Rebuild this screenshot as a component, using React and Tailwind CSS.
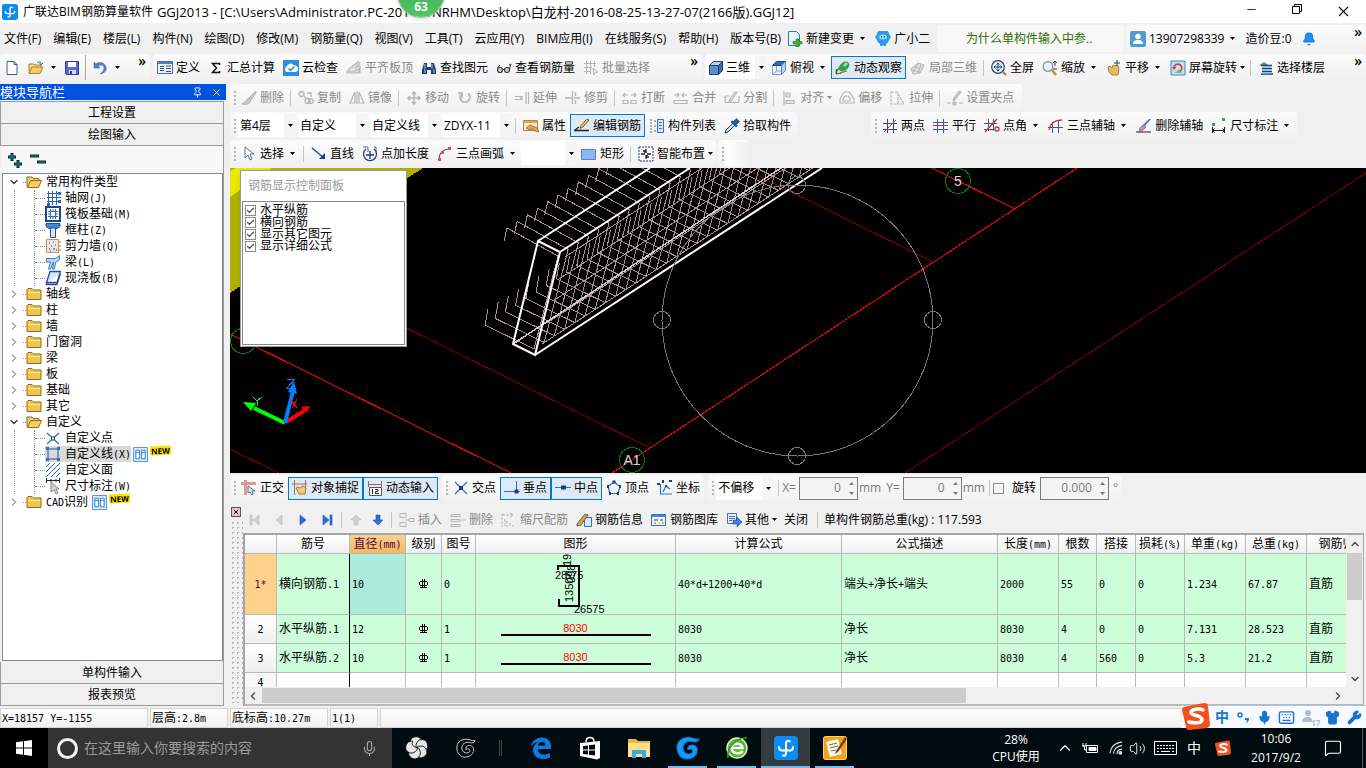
import { useState } from "react";
import clsx from "clsx";
import {
  Bell,
  Check,
  ChevronDown,
  ChevronLeft,
  ChevronRight,
  ChevronUp,
  Keyboard,
  MessageSquare,
  Mic,
  Minus,
  Pin,
  Shirt,
  Volume2,
  Wifi,
  Wrench,
  X,
} from "lucide-react";

const navy = "#1f3f77";
const blue = "#2a6fc9";

// 16x16 toolbar glyphs
const glyphs = {
  file: <path d="M3 1.5h7l3 3v10H3zM10 1.5v3h3" fill="#fff" stroke="#3c5a86" />,
  open: (
    <>
      <path d="M1 13V4h5l1 1h6v3" fill="#f6d77c" stroke="#a8813a" />
      <path d="M1 13.5 4 7h11l-3 6.5z" fill="#fbc95c" stroke="#a8813a" />
      <path d="M9 3c2-2 4-1 4 1m-1.500-1L13 5l2-2" fill="none" stroke="#3a6ea5" />
    </>
  ),
  save: (
    <>
      <path d="M1.500 1.500h13v13h-12l-1-1z" fill="#5b68d6" stroke="#2d3a8c" />
      <path d="M4 2h8v5H4z" fill="#fff" />
      <path d="M5 10h7v4H5z" fill="#d8dcf5" />
      <path d="M6 11h2v3H6z" fill="#2d3a8c" />
    </>
  ),
  undo: (
    <path d="M2 2v6h6L6 6c3-2 6-1 6 2 0 2-1 4-4 6 5-1 7-4 6-7C13 3 8 1 4 4z" fill="#4a86d8" stroke="#2a5ca8" strokeWidth=".5" />
  ),
  define: (
    <>
      <path d="M.5 1.500h15v12H.5z" fill="#e8f0fb" stroke="#4a72ad" />
      <path d="M1 2h14v2H1z" fill="#4a80cc" />
      <path d="M3 6.500h4M3 8.500h4M3 10.500h4M9 8.500h5M9 11.500h5M9 6h5" stroke="#2f4f85" />
    </>
  ),
  sigma: <path d="M11.500 5V3.500h-7L8.500 8l-4 4.500h7V11" fill="none" stroke="#111" strokeWidth="1.500" />,
  cloud: (
    <>
      <path d="M0 0h16v16H0z" fill="#2a8fdc" />
      <path d="M4 12a3 3 0 0 1-.5-5.500A4.200 4.200 0 0 1 11 5.500 3.300 3.300 0 0 1 12.500 12z" fill="#fff" />
      <path d="m5.500 8.500 2 2 4-4" fill="none" stroke="#2a8fdc" strokeWidth="1.500" />
    </>
  ),
  slab: (
    <path d="M1 13h12V9l-5 2H1zM3 9l9-7 2 1-5 6M3 11V8M12 6h2v7" fill="#ddd" stroke="#b5b5b5" strokeWidth="1.200" />
  ),
  find: (
    <>
      <path d="M3 3h3v4h4V3h3l2 7v4h-5v-4H6v4H1v-4z" fill={navy} />
      <path d="M3 10h1v3M12 10h1v3M4 4v5M11 4v5" stroke="#a9c4ee" fill="none" />
    </>
  ),
  glasses: (
    <>
      <circle cx="4" cy="10" r="2.500" fill="#cfd6df" stroke="#333" strokeWidth="1.200" />
      <circle cx="11" cy="10" r="2.500" fill="#cfd6df" stroke="#333" strokeWidth="1.200" />
      <path d="M7 9.500h1M1.500 8 4 5M13.500 9 15 4l-2 1" stroke="#333" fill="none" />
    </>
  ),
  grid: <path d="M1 3.500h12M1 7.500h8M1 11.500h7M3.500 1v13M7.500 1v13M11.500 1v6M10 8l5 4-3 .5-1 2.500z" fill="none" stroke="#b5b5b5" />,
  cube: (
    <>
      <path d="M1.500 5.500h9v9h-9z" fill="#5f8fc4" stroke={navy} />
      <path d="m1.500 5.500 4-4h9l-4 4z" fill="#b4d2f0" stroke={navy} />
      <path d="m10.500 5.500 4-4v9l-4 4z" fill="#3a6aa6" stroke={navy} />
    </>
  ),
  cubeTop: (
    <>
      <path d="M1.500 5.500h9v9h-9z" fill="#e6f1fc" stroke="#7fa7d4" />
      <path d="m1.500 5.500 4-4h9l-4 4z" fill="#2f6cb4" stroke={navy} />
      <path d="m10.500 5.500 4-4v9l-4 4z" fill="#b4d2f0" stroke="#5c8bc4" />
      <path d="M5.500 6v5h5M5.500 11l-3.500 3" stroke="#7fa7d4" fill="none" />
    </>
  ),
  orbit: (
    <>
      <path d="M1 14c1-4 4-8 9-9M1 14l5-1M1 14l.5-5" stroke="#2f6e3f" strokeWidth="1.200" fill="none" />
      <ellipse cx="9" cy="6.500" rx="6" ry="4" fill="#2fa24a" transform="rotate(-40 9 6.500)" />
      <ellipse cx="10.500" cy="4.500" rx="2.500" ry="1.500" fill="#9be3a7" transform="rotate(-40 10.500 4.500)" />
      <path d="m5 13 7-2" stroke="#c04a3a" />
    </>
  ),
  cubeGray: (
    <>
      <path d="m1 9 7-6 6 2-4 8-7 1z" fill="#dedede" stroke="#b5b5b5" />
      <path d="m4 6.500 6 2.500M3 12l5-8M8 13l3-8M2 10l8 2" stroke="#b5b5b5" fill="none" />
    </>
  ),
  full: (
    <>
      <circle cx="7" cy="7" r="6.300" fill="#eaf2fc" stroke={navy} strokeWidth="1.200" />
      <path d="M7 3v8M3 7h8M5.500 4.500 7 3l1.500 1.500M5.500 9.500 7 11l1.500-1.500M4.500 5.500 3 7l1.500 1.500M9.500 5.500 11 7 9.500 8.500" fill="none" stroke={navy} />
      <path d="m12 12 3 3" stroke="#b9763a" strokeWidth="2.200" />
    </>
  ),
  zoom: (
    <>
      <circle cx="6" cy="6.500" r="4.800" fill="#eaf2fc" stroke="#8496b0" strokeWidth="1.400" />
      <path d="m10 10 4 5" stroke="#c98a3a" strokeWidth="2.500" />
      <path d="M13 1v5M11 3l2-2 2 2M11 9h4" stroke={navy} fill="none" />
    </>
  ),
  pan: (
    <>
      <path d="M2 7l2-1 2 2 1-3 2 1 1-1 2 1 1 3-1 6H6L3 12z" fill="#e4bd62" stroke="#a8813a" />
      <path d="M11 0v6M8 3h6" stroke={navy} />
    </>
  ),
  spin: (
    <>
      <path d="M1 1h14v14H1z" fill="#bfe2f7" stroke="#3a86c8" />
      <path d="M4 13h8l-3-4-2 2z" fill="#7ec36a" />
      <path d="M4 7a4 4 0 1 1 6 4.500" fill="none" stroke="#d83a2a" strokeWidth="1.600" />
      <path d="M2 7h4.500L4 10z" fill="#d83a2a" />
    </>
  ),
  floors: (
    <>
      <path d="M1 5.500 6 2l5 3.500z" fill="#3fae5a" />
      <path d="M3 5.500h11M4 8.500h10M4 11.500h10M3 14h12" stroke={navy} strokeWidth="1.300" />
      <path d="M4 7h9M4 10h9M4 13h9" stroke="#6ec3e0" />
    </>
  ),
  brush: <path d="M15 1 8 8l2 2 5-7zM8 8c-3 1-3 4-7 6 5 1 8 0 9-4z" fill="#c9c9c9" stroke="#b0b0b0" />,
  copy: (
    <g fill="none" stroke="#b5b5b5" strokeWidth="1.300">
      <circle cx="3.500" cy="4" r="2.500" />
      <circle cx="9.500" cy="11" r="2.500" />
      <circle cx="13" cy="11" r="2.300" />
      <path d="m6 6 2 2M9 3h4v4" />
    </g>
  ),
  mirror: <path d="M6 2v11H1zM10 2v11h5zM8 1v13" fill="none" stroke="#b5b5b5" strokeWidth="1.200" />,
  move: <path d="M8 2v12M2 8h12M6 4l2-2 2 2M6 12l2 2 2-2M4 6 2 8l2 2M12 6l2 2-2 2" fill="none" stroke="#b5b5b5" strokeWidth="1.500" />,
  rotate: <path d="M4 4a5 5 0 1 0 8 0M5 8V3H1M12 3v3" fill="none" stroke="#bdbdbd" strokeWidth="2" />,
  extend: <path d="M1 6.500h6v3H1M8 6v4M12 2v12M14.500 2v12" fill="none" stroke="#b5b5b5" strokeWidth="1.200" />,
  trim: <path d="M0 8h7M9 8h6M7.500 1v13M10.500 2v4M10.500 10v4" fill="none" stroke="#b5b5b5" strokeWidth="1.300" />,
  break: <path d="M1 10.500h5v3H1zM9 10.500h5v3H9zM1 5h5M9 5h5M3 3 1 5l2 2M12 3l2 2-2 2" fill="none" stroke="#b5b5b5" strokeWidth="1.200" />,
  merge: <path d="M1 10.500h13v3H1zM1 5h5M9 5h5M4 3l2 2-2 2M11 3 9 5l2 2" fill="none" stroke="#b5b5b5" strokeWidth="1.200" />,
  split: <path d="M1 6h5M1 12.500h14M1 6v6M15 6v6M13 2 7 11l-2 1 .5-2L11 2z" fill="none" stroke="#b5b5b5" strokeWidth="1.200" />,
  align: <path d="M3 1v14M5 3h4v4H5zM5 10.500h8v3H5z" fill="#e2e2e2" stroke="#b5b5b5" strokeWidth="1.200" />,
  offset: <path d="M5 2h5l5 7v4H1V9zM6 6h3l2 3v2H4V9z" fill="none" stroke="#b5b5b5" strokeWidth="1.200" />,
  stretch: <path d="M1 2h7v12H1zM8 4l6 10H8" fill="none" stroke="#b5b5b5" strokeWidth="1.200" strokeDasharray="3 1" />,
  clip: <path d="M0 13h4M12 13h4M6 12h3v3H6zM14 2 8 10l-2 .5.500-2L12 1z" fill="#c9c9c9" stroke="#b5b5b5" />,
  props: (
    <>
      <path d="M.5 2.500h14v10H.5z" fill="#f4ead0" stroke="#a58a54" />
      <path d="M1 3h13v2H1z" fill="#f0a23a" />
      <path d="m3 10 4-3 7 3 2 4-4-1-3-2-3 1z" fill="#e9a63c" stroke="#8a5a1c" strokeWidth=".7" />
    </>
  ),
  pencil: (
    <>
      <path d="M0 12.500h15M1 12l4-3" stroke="#222" strokeWidth="1.300" />
      <path d="m13 1 2 1-6 7-3 1.500 1-3z" fill="#e9b95a" stroke="#6b4a1c" strokeWidth=".8" />
    </>
  ),
  list: (
    <>
      <path d="M1 2h2M1 5h2M1 8h2M1 11h2M1 14h2M5 3h2M5 8h2M5 13h2" stroke="#666" />
      <path d="M8.500 1.500h6v13h-6z" fill="#dbe8fa" stroke={blue} />
      <path d="M10 4.500h3M10 7.500h3M10 10.500h3" stroke={blue} />
    </>
  ),
  picker: (
    <>
      <path d="m1 15 1-3 7-7 2 2-7 7z" fill="#cfe0f7" stroke={navy} />
      <path d="m7 4 5 5 1.500-1.500-1-1 3-3-3-3-3 3-1-1z" fill="#2458b0" stroke={navy} strokeWidth=".6" />
    </>
  ),
  axisTwo: <><path d="M1 5.500h14M1 11.500h14M5.500 1v14M11.500 1v14" stroke="#2f4a8c" /><path d="M2 14 14 2" stroke="#d12a2a" /></>,
  axisPar: <><path d="M0 11.500h15M4.500 1v14M10.500 1v14M0 4.500h15" stroke="#3a56a0" /><path d="M0 7.500h15" stroke="#d12a2a" /></>,
  axisAngle: <><path d="M0 5.500h13M0 11.500h10M4.500 1v12M9.500 1v12" stroke="#3a56a0" /><path d="M1 14 13 1" stroke="#d12a2a" strokeWidth="1.300" /><circle cx="13" cy="11" r="2" fill="none" stroke="#d12a2a" strokeWidth="1.300" /></>,
  axisArc: <><path d="M4.500 4v11M10.500 3v12M0 9.500h15" stroke="#3a56a0" /><path d="M1 12C2 6 6 2 14 2" fill="none" stroke="#d12a2a" strokeWidth="1.300" /></>,
  axisDel: (
    <>
      <path d="M0 14h15" stroke="#222" />
      <path d="m15 1-6 7-2-1 6-6z" fill="#3f76c8" />
      <path d="m4 10 3-3 3 2-4 4-3 1z" fill="#d58ab8" stroke="#7a4a6c" strokeWidth=".7" />
    </>
  ),
  dim: <><path d="M1.500 9v6M13.500 9v6M1 12.500h13M3.500 10.500l-2 2 2 2M11.500 10.500l2 2-2 2" fill="none" stroke="#222" /><path d="M1 5h3v3H1zM11 0h3v3h-3z" fill="#3aa54a" /></>,
  cursor: <path d="M4 1v11l3-3 2 5 2-1-2-5h4z" fill="#fff" stroke="#5a6f9a" />,
  line: <><path d="M1 2 13 12" stroke={navy} strokeWidth="1.300" /><path d="M14 7v6H8z" fill={navy} /></>,
  plusLen: <><path d="M4 3a6.500 6.500 0 1 0 8 0M8 5v8M4 9h8" fill="none" stroke={navy} strokeWidth="1.300" /><path d="M1 1h5v5M12 1h2v5" fill="none" stroke={blue} /></>,
  arc: <><path d="M2 14C2 7 6 3 13 3" fill="none" stroke="#3a56a0" strokeWidth="1.200" /><path d="M1 12h3v3H1zM4 5h3v3H4zM11 1h3v3h-3z" fill="#e0523a" /></>,
  rect: <path d="M.5 3.500h14v10H.5z" fill="#8fb4f4" stroke="#5c7fd0" />,
  smart: <><path d="M1 1h14v14H1z" fill="none" stroke={navy} strokeDasharray="2 1" /><path d="M8 3v4M8 9v4M3 8h4M9 8h4M5 5h2v2M11 11H9V9" stroke="#222" fill="none" strokeWidth="1.300" /></>,
  ortho: <><path d="M0 3.500h15M4.500 0v15" stroke="#d99a9a" strokeWidth="3" /><path d="M7 6v7l2-1 2 3 1-1-1-3h3z" fill="#e6ecf5" stroke="#5c7396" /></>,
  snap: <><path d="M2.500 0v15M13.500 0v10M0 4h15" stroke="#a86a6a" /><path d="m4 8 2-1 2 1 3-2 3 2-1 6H7z" fill="#f0cb74" stroke="#a07a30" /></>,
  dyn: <><path d="M1 4.500h14M1.500 1v6M14.500 1v6" stroke="#b05a5a" fill="none" /><path d="M2.500 7.500h12v8h-12z" fill="#fff" stroke="#555" /><path d="M5.500 9v5M8 9.500h3v2H8.500v2H12" stroke="#222" fill="none" /></>,
  cross: <><path d="m2 2 12 12M14 2 2 14" stroke={blue} strokeWidth="1.200" /><path d="M6 6h4v4H6z" fill={navy} /></>,
  perp: <><path d="M0 11.500h16M12.500 1v10" stroke={blue} /><path d="M10.500 9.500h4v4h-4z" fill={navy} /></>,
  mid: <><path d="M0 7.500h16" stroke={blue} /><path d="M6 5.500h5v4H6z" fill={navy} /></>,
  vertex: <><path d="m8 2 6 4.500-2 7H4l-2-7z" fill="none" stroke={blue} strokeWidth="1.200" /><path d="M6.500.5h3v3h-3zM1 5h2v3H1zM13 5h2v3h-2zM3 12h2v3H3zM11 12h2v3h-2z" fill={navy} /></>,
  coord: <><path d="M3.500 4v10H15M6 12l3-6 4 3" fill="none" stroke={blue} strokeWidth="1.200" /><path d="M0 3h3v2H0zM5 0h2v3H5zM12 0h3v2h-3zM8 5h2v2H8z" fill={navy} /></>,
  insert: <path d="M1 1.500h6v4H1zM1 10.500h6v4H1zM10 6.500h5v3h-5zM6 8h3" fill="none" stroke="#b5b5b5" />,
  remove: <path d="M1 2.500h9v2H1zM1 7.500h9v2H1zM1 12.500h9v2H1zM11 8h5" fill="none" stroke="#b5b5b5" />,
  ruler: <path d="M1 1v14M1 3h11M9 1l3 2-3 2M4 7v8M6 9v6M9 11v4M12 13v2" fill="none" stroke="#b5b5b5" strokeDasharray="3 1" />,
  info: <><path d="M8.500 5.500h7v9h-7z" fill="#dce9fb" stroke={blue} /><path d="M1 12 9 2l3 1-7 10-4 1z" fill="#e0a14a" stroke="#444" strokeWidth=".8" /></>,
  lib: <><path d="M.5 2.500h14v11H.5z" fill="#eef4fc" stroke={blue} /><path d="M1 3h13v2H1z" fill="#4a86d8" /><path d="M3 8h4M9 8h3" stroke={navy} /><path d="M3 11h2" stroke="#d33" /><path d="M7 11h2" stroke="#e9a63c" /><path d="M11 11h2" stroke="#3a3" /></>,
  other: <><path d="M1.500 1.500h9v10h-9z" fill="#eef4fc" stroke="#4a72ad" /><path d="M3 4.500h6M3 6.500h6M3 8.500h3" stroke="#4a72ad" /><path d="M7 8h4V5l5 5-5 5v-3H7z" fill="#3f7fe0" stroke={navy} strokeWidth=".5" /></>,
  newDoc: <><path d="M1.500.5h8l3 3v11h-11z" fill="#e9f6fc" stroke="#2a7fa8" /><path d="M9 8h3v2.500h3V13h-3v3H9v-3H6v-2.500h3z" fill="#47b52a" stroke="#2a7a18" strokeWidth=".6" /></>,
  robot: <><path d="M2 3a6 4.500 0 0 1 12 0l2 3-2 3a5 5 0 0 1-3 4v2H9l-1-1-1 1H5v-2a5 5 0 0 1-3-4L0 6z" fill="#2a9bea" /><ellipse cx="8" cy="6" rx="4" ry="2.500" fill="#9fd4fa" /><path d="M6.500 5v1.500M9.500 5v1.500" stroke="#0a4a88" /></>,
  user: <><rect width="16" height="16" rx="2" fill="#4a9fd0" /><circle cx="8" cy="5.500" r="2.700" fill="#fff" /><path d="M3 13c0-3 2-4 5-4s5 1 5 4z" fill="#fff" /></>,
  // tree
  folder: <><path d="M1 13.500v-10l1-1h4l1.500 1.500H15v9.500z" fill="#f3c64e" stroke="#8f6c24" /><path d="M2 6h12v1H2z" fill="#fdeba8" /></>,
  folderOpen: <><path d="M1 13V3h5l1 1.500h6V7" fill="#f3d078" stroke="#8f6c24" /><path d="m1.500 13.500 3-7H15.500l-3 7z" fill="#f8cf5e" stroke="#8f6c24" /></>,
  axisNet: <><path d="M2 3.500h14M2 7.500h14M2 11.500h14M3.500 1v14M7.500 1v14M11.500 1v14" stroke="#2f63b8" /><path d="M13 2h3v3h-3zM13 10h3v3h-3zM2 13h3v3H2z" fill="#2f63b8" /></>,
  raft: <><path d="M1 1h14v14H1z" fill="#fff" stroke="#134a86" strokeWidth="2" /><path d="M3 5.500h10M3 10.500h10M5.500 3v10M10.500 3v10M8 3v2M8 11v2M3 8h2M11 8h2" stroke="#2f6eb0" /></>,
  column: <><path d="M1 1.500h14v3l-3 2H4l-3-2z" fill="#3f86d6" stroke="#1f4f98" /><path d="M5.500 6h5v9.500h-5z" fill="#d5e6fa" stroke="#1f4f98" /></>,
  wall: <><path d="M1.500 1.500h12v13h-12z" fill="#e8e8e8" stroke="#d08a5a" /><path d="M4 5h1M8 4h1M6 8h1M10 7h1M4 11h1M8 11h2M11 12h1M5 13h1" stroke="#333" /><path d="M14 4h2M14 8h2M14 12h2" stroke="#d05a2a" /></>,
  beam: <><path d="M1.500 4.500h9l4-3v4l-4 3-1 6.500h-2l1-7-3 7h-2l2-7h-4z" fill="#b5d8f6" stroke="#2f7ec0" /></>,
  slabBlue: <path d="M5 1.500h10.500l-3.500 11H1.500zM1.500 12.500v2H12l3.500-11" fill="#d5e6fa" stroke="#1f4fa8" strokeWidth="1.300" />,
  xPoint: <><path d="m2 3 12 11M14 3 2 14" stroke={blue} strokeWidth="1.200" /><path d="M6.500 7h3v3h-3z" fill="#fff" stroke={navy} /></>,
  polyline: <><path d="M3 3h10v10H3z" fill="none" stroke="#1f4fa8" /><path d="M1 1h3v3H1zM12 1h3v3h-3zM1 12h3v3H1zM12 12h3v3h-3z" fill="#2a6fc9" /></>,
  hatch: <path d="m1 5 4-4M1 10 10 1M1 15 15 1M6 15l9-9M11 15l4-4" stroke="#2f63b8" />,
  dimCursor: <><path d="M1.500 0v5M14.500 0v5M1 2.500h14M6 1v3M11 1v3" stroke="#222" fill="none" /><path d="M6 4v10l3-2 2 4 2-1-2-4h3z" fill="#d0d0d0" stroke="#8a8a8a" /></>,
  book: <><path d="M.5.500h15v15H.5z" fill="#d7e9fb" stroke="#4a92d8" /><path d="M3 3.500h4v9H3zM9 3.500h4v9H9z" fill="#fff" stroke="#2a7fd0" /><path d="M3 6h4M9 6h4" stroke="#2a7fd0" /></>,
};

function Glyph({ name, className = "size-4" }) {
  return (
    <svg viewBox="0 0 16 16" className={clsx("shrink-0", className)} fill="none">
      {glyphs[name]}
    </svg>
  );
}

function Caret() {
  return (
    <svg viewBox="0 0 5 3" className="w-[5px] h-[3px] shrink-0">
      <path d="M0 0h5L2.500 3z" fill="currentColor" />
    </svg>
  );
}

// latin runs are half the width of a Chinese character
function Sim({ children }) {
  return children.split(/([\x20-\x7e]+)/).map((part, i) =>
    i % 2 ? (
      <span key={i} className="font-['DejaVu_Sans_Mono',monospace] text-[10px] whitespace-pre">{part}</span>
    ) : (
      part
    )
  );
}

function Grip() {
  return <span className="ml-1 mr-px h-[14px] shrink-0 border-l-2 border-dotted border-[#b4b4b4]" />;
}

function Sep() {
  return <span className="ml-0.5 mr-[3px] h-4 w-px shrink-0 bg-[#c4c4c4]" />;
}

function Bar({ children, className }) {
  return (
    <div className={clsx("flex h-[27px] shrink-0 items-center rounded-sm bg-linear-to-b from-[#fbfbfb] to-[#f1f1f1]", className)}>
      {children}
    </div>
  );
}

function Tool({ icon, label, active, disabled, split, menu }) {
  return (
    <button
      disabled={disabled}
      className={clsx(
        "flex h-[23px] shrink-0 items-center gap-[3px] border px-[3px]",
        active ? "border-[#0078d7] bg-[#dde9f5]" : "border-transparent",
        disabled && "text-[#8a8a8a]"
      )}
    >
      {icon && <Glyph name={icon} />}
      <span>{label}</span>
      {menu && <span className="-mr-px"><Caret /></span>}
      {split && <span className="ml-[3px] mr-0.5"><Caret /></span>}
    </button>
  );
}

function Combo({ value, label, className }) {
  return (
    <div className={clsx("flex h-[23px] shrink-0 items-center bg-white", className)}>
      <select aria-label={label} className="h-full min-w-0 flex-1 appearance-none pl-0.5 outline-none" defaultValue={value}>
        <option>{value}</option>
      </select>
      <span className="flex h-full w-3 items-center justify-center bg-[#f5f5f5]"><Caret /></span>
    </div>
  );
}

function More() {
  return <button className="self-start px-1 text-[14px] leading-3.5 font-semibold">»</button>;
}

const menus = [
  "文件(F)", "编辑(E)", "楼层(L)", "构件(N)", "绘图(D)", "修改(M)", "钢筋量(Q)", "视图(V)",
  "工具(T)", "云应用(Y)", "BIM应用(I)", "在线服务(S)", "帮助(H)", "版本号(B)",
];

function TitleBar() {
  return (
    <header className="relative flex h-[23px] shrink-0 items-center bg-white pl-0.5">
      <AppLogo className="size-4" />
      <h1 className="ml-[5px] flex items-center gap-1 whitespace-nowrap">
        <span>广联达BIM钢筋算量软件</span>
        <span className="text-[13px]">
          GGJ2013 - [C:\Users\Administrator.PC-201411NRHM\Desktop\白龙村-2016-08-25-13-27-07(2166版).GGJ12]
        </span>
      </h1>
      <div className="ml-auto flex">
        <button aria-label="最小化" className="flex w-[46px] justify-center"><Minus size={13} strokeWidth={1.500} /></button>
        <button aria-label="还原" className="flex w-[46px] justify-center">
          <svg viewBox="0 0 12 12" className="size-3" fill="none" stroke="#000">
            <path d="M1.500 3.500h7v7h-7zM3.500 3.500v-2h7v7h-2" />
          </svg>
        </button>
        <button aria-label="关闭窗口" className="flex w-[46px] justify-center"><X size={17} strokeWidth={1.500} /></button>
      </div>
      <div className="absolute -top-[29px] left-[398px] flex size-[46px] items-end justify-center rounded-full bg-linear-to-b from-[#2fae4c] to-[#52c566] pb-[2px] font-bold text-white shadow-md ring-1 ring-[#9ccfa5]">
        63
      </div>
    </header>
  );
}

function AppLogo({ className }) {
  return (
    <svg viewBox="0 0 24 24" className={className} fill="none">
      <rect width="24" height="24" rx="4" fill="#0b8cf0" />
      <path d="M16 5.500c-2-1.500-4-.500-4 2V17c0 2-1 3-3 2.500M5 11c0 2 1 3.500 3 3.500h8c2 0 3-1.500 3-3.500" stroke="#fff" strokeWidth="2" strokeLinecap="round" />
    </svg>
  );
}

function MenuBar() {
  return (
    <nav className="flex h-[31px] shrink-0 items-center">
      <div className="flex items-center gap-3 pl-1">
        {menus.map((m) => (
          <button key={m} className="whitespace-nowrap">{m}</button>
        ))}
      </div>
      <div className="flex flex-1 items-center pl-0.5">
        <Tool icon="newDoc" label="新建变更" split />
        <Tool icon="robot" label="广小二" />
      </div>
      <a href="#tip" className="flex h-[27px] w-[187px] items-center rounded-sm bg-[#f8f8f8] pl-[29px] text-[#2f6b00]">为什么单构件输入中参..</a>
      <Bar className="ml-0.5 w-[240px]">
        <Tool icon="user" label="13907298339" split />
        <span className="ml-1">造价豆:0</span>
        <Bell size={14} className="ml-2.5 fill-[#1e90ff] text-[#1e78d8]" />
        <span className="ml-auto self-stretch"><More /></span>
      </Bar>
    </nav>
  );
}

function MainToolbar() {
  return (
    <div className="flex h-[30px] shrink-0 items-start gap-[3px]">
      <Bar className="w-[150px]">
        <button aria-label="新建" className="ml-1"><Glyph name="file" /></button>
        <button aria-label="打开" className="ml-2 flex items-center gap-[7px]"><Glyph name="open" /><Caret /></button>
        <button aria-label="保存" className="ml-2"><Glyph name="save" /></button>
        <span className="ml-[5px] h-[25px] w-px bg-[#a8a8a8]" />
        <button aria-label="撤销" className="ml-1.5 flex items-center gap-[7px]"><Glyph name="undo" /><Caret /></button>
        <span className="ml-auto self-stretch"><More /></span>
      </Bar>
      <Bar className="w-[549px]">
        <Tool icon="define" label="定义" />
        <Tool icon="sigma" label="汇总计算" />
        <Tool icon="cloud" label="云检查" />
        <Tool icon="slab" label="平齐板顶" disabled />
        <Tool icon="find" label="查找图元" />
        <Tool icon="glasses" label="查看钢筋量" />
        <Tool icon="grid" label="批量选择" disabled />
        <span className="ml-auto self-stretch"><More /></span>
      </Bar>
      <Bar className="flex-1">
        <div className="flex items-center bg-white pl-[3px]">
          <Glyph name="cube" />
          <Combo value="三维" label="视图方式" className="w-[43px]" />
        </div>
        <Tool icon="cubeTop" label="俯视" split />
        <Tool icon="orbit" label="动态观察" active />
        <Tool icon="cubeGray" label="局部三维" disabled />
        <Sep />
        <Tool icon="full" label="全屏" />
        <Tool icon="zoom" label="缩放" split />
        <Tool icon="pan" label="平移" split />
        <Tool icon="spin" label="屏幕旋转" menu />
        <Sep />
        <Tool icon="floors" label="选择楼层" />
        <span className="ml-auto self-stretch"><More /></span>
      </Bar>
    </div>
  );
}

function EditToolbars() {
  return (
    <div className="flex shrink-0 flex-col items-start gap-px pb-px">
      <Bar className="pr-1">
        <Grip />
        <Tool icon="brush" label="删除" disabled />
        <Sep />
        <Tool icon="copy" label="复制" disabled />
        <Tool icon="mirror" label="镜像" disabled />
        <Sep />
        <Tool icon="move" label="移动" disabled />
        <Tool icon="rotate" label="旋转" disabled />
        <Sep />
        <Tool icon="extend" label="延伸" disabled />
        <Tool icon="trim" label="修剪" disabled />
        <Sep />
        <Tool icon="break" label="打断" disabled />
        <Tool icon="merge" label="合并" disabled />
        <Tool icon="split" label="分割" disabled />
        <Sep />
        <Tool icon="align" label="对齐" disabled menu />
        <Tool icon="offset" label="偏移" disabled />
        <Tool icon="stretch" label="拉伸" disabled />
        <Sep />
        <Tool icon="clip" label="设置夹点" disabled />
      </Bar>
      <div className="flex gap-[74px]">
        <Bar className="pr-0.5">
          <Grip />
          <div className="mr-px flex gap-0.5 pl-px">
            <Combo value="第4层" label="楼层" className="w-[58px]" />
            <Combo value="自定义" label="构件类型" className="w-[70px]" />
            <Combo value="自定义线" label="构件" className="w-[70px]" />
            <Combo value="ZDYX-11" label="名称" className="w-[70px]" />
          </div>
          <Sep />
          <Tool icon="props" label="属性" />
          <Tool icon="pencil" label="编辑钢筋" active />
          <Tool icon="list" label="构件列表" />
          <Tool icon="picker" label="拾取构件" />
        </Bar>
        <Bar className="pr-0.5">
          <Grip />
          <Tool icon="axisTwo" label="两点" />
          <Tool icon="axisPar" label="平行" />
          <Tool icon="axisAngle" label="点角" split />
          <Tool icon="axisArc" label="三点辅轴" split />
          <Tool icon="axisDel" label="删除辅轴" />
          <Tool icon="dim" label="尺寸标注" split />
        </Bar>
      </div>
      <div className="flex gap-0.5">
        <Bar>
          <Grip />
          <Tool icon="cursor" label="选择" split />
          <Sep />
          <Tool icon="line" label="直线" />
          <Tool icon="plusLen" label="点加长度" />
          <Tool icon="arc" label="三点画弧" split />
          <Combo value="" label="画法" className="w-[56px]" />
          <Tool icon="rect" label="矩形" />
          <Sep />
          <Tool icon="smart" label="智能布置" menu />
        </Bar>
        <Bar>
          <Grip />
          <span className="h-6 w-6 bg-linear-to-r from-white to-[#f0f0f0]" />
        </Bar>
      </div>
    </div>
  );
}

const tree = [
  { label: "常用构件类型", open: true, children: [
    { icon: "axisNet", label: "轴网(J)" },
    { icon: "raft", label: "筏板基础(M)" },
    { icon: "column", label: "框柱(Z)" },
    { icon: "wall", label: "剪力墙(Q)" },
    { icon: "beam", label: "梁(L)" },
    { icon: "slabBlue", label: "现浇板(B)" },
  ] },
  { label: "轴线" },
  { label: "柱" },
  { label: "墙" },
  { label: "门窗洞" },
  { label: "梁" },
  { label: "板" },
  { label: "基础" },
  { label: "其它" },
  { label: "自定义", open: true, children: [
    { icon: "xPoint", label: "自定义点" },
    { icon: "polyline", label: "自定义线(X)", selected: true, isNew: true },
    { icon: "hatch", label: "自定义面" },
    { icon: "dimCursor", label: "尺寸标注(W)" },
  ] },
  { label: "CAD识别", isNew: true },
];

function NewTag() {
  return (
    <>
      <Glyph name="book" className="ml-0.5 size-[15px]" />
      <span className="ml-0.5 -rotate-3 self-start bg-[#ffe000] px-px text-[8px] leading-[9px] font-bold">NEW</span>
    </>
  );
}

function TreeNode({ node }) {
  return (
    <li>
      <div className="flex h-4 items-center whitespace-nowrap">
        <button aria-label={node.label} className={clsx("flex w-3 justify-center", node.open ? "text-[#333]" : "text-[#9a9a9a]")}>
          {node.open ? <ChevronDown size={14} strokeWidth={2.500} /> : <ChevronRight size={14} strokeWidth={2.500} />}
        </button>
        <span className="ml-[3px] w-[3px] border-t border-dotted border-[#888]" />
        <Glyph name={node.open ? "folderOpen" : "folder"} />
        <span className="mr-0.5 ml-1"><Sim>{node.label}</Sim></span>
        {node.isNew && <NewTag />}
      </div>
      {node.children && (
        <ul className="ml-[6px] border-l border-dotted border-[#999] pl-[19px]">
          {node.children.map((c) => (
            <li key={c.label} className="flex h-4 items-center border-l border-dotted border-[#999] whitespace-nowrap">
              <span className="w-[10px] border-t border-dotted border-[#888]" />
              <span className={clsx("flex h-4 items-center", c.selected && "bg-[#d9d9d9]")}>
                <Glyph name={c.icon} />
                <span className="ml-1"><Sim>{c.label}</Sim></span>
              </span>
              {c.isNew && <NewTag />}
            </li>
          ))}
        </ul>
      )}
    </li>
  );
}

function NavButton({ children }) {
  return (
    <button className="h-[22px] shrink-0 border-b border-l border-[#9a9a9a] bg-[#f0f0f0] text-center">{children}</button>
  );
}

function Sidebar() {
  return (
    <aside className="flex w-[226px] shrink-0 flex-col">
      <div className="flex h-4 items-center bg-[#0052e0] text-[13px] leading-4 text-white">
        <span>模块导航栏</span>
        <button aria-label="固定" className="ml-auto"><Pin size={11} /></button>
        <button aria-label="关闭导航栏" className="mr-1 ml-2"><X size={11} /></button>
      </div>
      <div className="mt-px mr-0.5 flex min-h-0 flex-1 flex-col border-t border-r border-[#9a9a9a]">
        <NavButton>工程设置</NavButton>
        <NavButton>绘图输入</NavButton>
        <div className="ml-0.5 flex h-[27px] shrink-0 items-center gap-[7px] bg-[#f7f7f7] pl-[5px]">
          <button aria-label="全部展开">
            <svg viewBox="0 0 16 16" className="size-4" fill="none">
              <path d="M5 1v8M1 5h8M11 8v8M7 12h8" stroke="#0a2a28" strokeWidth="3" />
              <path d="M5 2v6M2 5h6M11 9v6M8 12h6" stroke="#0a8f83" />
            </svg>
          </button>
          <button aria-label="全部折叠">
            <svg viewBox="0 0 16 16" className="size-4" fill="none">
              <path d="M0 4h9M7 10h9" stroke="#0a2a28" strokeWidth="3" />
              <path d="M1 4h7M8 10h7" stroke="#0a8f83" />
            </svg>
          </button>
        </div>
        <ul className="mb-px ml-0.5 min-h-0 flex-1 border border-[#828790] bg-white pl-[5px]">
          {tree.map((n) => (
            <TreeNode key={n.label} node={n} />
          ))}
        </ul>
        <NavButton>单构件输入</NavButton>
        <NavButton>报表预览</NavButton>
      </div>
    </aside>
  );
}

// stirrups repeat along the beam, one every 10px to the right and 6.5px up
const stirrups = Array.from({ length: 34 }, (_, i) => ({ x: i * 10.2, y: i * -6.6 }));
const bars = [[534, 349], [539, 328], [545, 306], [551, 284], [557, 262]];
const handles = [[797, 185], [662, 320], [933, 320], [797, 456]];

function Scene() {
  return (
    <svg className="absolute inset-0 h-full w-full" fill="none" shapeRendering="crispEdges">
      <g transform="translate(-230 -168)">
        <path d="M230 168h193L230 293z" fill="#b0b000" />
        <path d="M230 171l6-3h36l-42 29z" fill="#e8e800" />
        <g stroke="#800000">
          <path d="M380 315 650 448M230 449l49 24M743 168l190 94M905 473 1366 173" />
        </g>
        <g stroke="#f00">
          <path d="M612 473 1077 168M932 168l83 41M230 334 511 473" />
        </g>
        <clipPath id="mesh">
          <path d="M480 473V168h345L535 356z" />
        </clipPath>
        <g stroke="#a3958e" clipPath="url(#mesh)">
          {stirrups.map((s) => (
            <path key={s.x} d="M488 309l-3 16 49 24 24-93-51-28-3 13" transform={`translate(${s.x} ${s.y})`} />
          ))}
          {bars.map(([x, y]) => (
            <path key={x} d={`M${x + 8} ${y - 5}l300-195`} />
          ))}
        </g>
        <path d="M513 344 781 168" stroke="#d6cdc8" strokeWidth="1.500" />
        <g stroke="#fff" strokeWidth="2" shapeRendering="auto">
          <path d="M538 241l22 11-25 103-22-11zM538 241 650 168M560 252 690 168M535 355 822 168" />
        </g>
        <g stroke="#777">
          <circle cx="797.5" cy="320.5" r="135.500" />
          {handles.map(([x, y]) => (
            <circle key={x + y * 2} cx={x} cy={y} r="8.500" />
          ))}
        </g>
        <g stroke="#008000">
          <circle cx="958" cy="181" r="12.500" />
          <circle cx="632" cy="460" r="12.500" />
          <circle cx="243" cy="341" r="12.500" />
        </g>
        <g fill="#d8d8d8" fontSize="14" textAnchor="middle" className="font-['Liberation_Sans',sans-serif]">
          <text x="958" y="186">5</text>
          <text x="632" y="465">A1</text>
        </g>
        <g strokeWidth="4" shapeRendering="auto">
          <path d="M285 423l-31-15" stroke="#0f0" />
          <path d="M286 422l18-11" stroke="#f00" />
          <path d="M285 423l8-32" stroke="#0080ff" />
          <path d="M243 402l13 1-5 8z" fill="#0f0" />
          <path d="M310 406l-9 1 5 6z" fill="#f00" />
          <path d="M294 381l-6 11 9 2z" fill="#0080ff" />
        </g>
        <g strokeWidth="1">
          <path d="M253 397l4 4 5-4M257 401v5" stroke="#0f0" />
          <path d="M297 399l-5 9M291 400l6 8" stroke="#f00" />
          <path d="M287 379h8l-8 9h9" stroke="#0080ff" />
        </g>
      </g>
    </svg>
  );
}

function DisplayPanel() {
  const [checked, setChecked] = useState({});
  return (
    <div className="absolute top-0.5 left-[10px] w-[167px] border border-[#9a9a9a] bg-white shadow-md">
      <h2 className="px-[7px] py-[7px] leading-4 text-[#9a9a9a]">钢筋显示控制面板</h2>
      <div className="mx-px mb-px h-[144px] border border-[#828790] pt-0.5 pl-0.5">
        {["水平纵筋", "横向钢筋", "显示其它图元", "显示详细公式"].map((t) => {
          const on = checked[t] ?? true;
          return (
            <label key={t} className="relative flex h-3 items-center gap-1 leading-3">
              <input
                type="checkbox"
                checked={on}
                onChange={(e) => setChecked({ ...checked, [t]: e.target.checked })}
                className="size-[11px] appearance-none border border-[#8a8a8a] bg-white"
              />
              {on && <Check size={9} strokeWidth={3.500} className="pointer-events-none absolute left-px text-[#555]" />}
              {t}
            </label>
          );
        })}
      </div>
    </div>
  );
}

function Spin({ label, value, className }) {
  return (
    <div className={clsx("flex h-[23px] items-center border border-[#7a7a7a] bg-[#f4f4f4] pr-[3px] text-[#7a7a7a]", className)}>
      <input aria-label={label} defaultValue={value} className="min-w-0 flex-1 text-right outline-none" />
      <span className="ml-2 flex flex-col gap-[7px]">
        <span className="rotate-180"><Caret /></span>
        <Caret />
      </span>
    </div>
  );
}

function SnapToolbar() {
  return (
    <div className="flex h-[30px] shrink-0 items-center gap-1">
      <Bar>
        <Grip />
        <Tool icon="ortho" label="正交" />
        <Tool icon="snap" label="对象捕捉" active />
        <Tool icon="dyn" label="动态输入" active />
      </Bar>
      <Bar>
        <Grip />
        <Tool icon="cross" label="交点" />
        <Tool icon="perp" label="垂点" active />
        <Tool icon="mid" label="中点" active />
        <Tool icon="vertex" label="顶点" />
        <Tool icon="coord" label="坐标" />
      </Bar>
      <Bar className="pr-1 text-[#7a7a7a]">
        <Grip />
        <Combo value="不偏移" label="偏移方式" className="mr-0.5 ml-px w-[58px] text-black" />
        <Sep />
        <span className="mr-[3px]">X=</span>
        <Spin label="X" value="0" className="w-[59px]" />
        <span className="mr-[5px] ml-px">mm</span>
        <span className="mr-[3px]">Y=</span>
        <Spin label="Y" value="0" className="w-[59px]" />
        <span className="mr-0.5 ml-px">mm</span>
        <Sep />
        <label className="mr-1 flex items-center gap-2 text-black">
          <input type="checkbox" className="size-[11px] appearance-none border border-[#8a8a8a]" />
          旋转
        </label>
        <Spin label="旋转角度" value="0.000" className="w-[69px]" />
        <span className="ml-1">°</span>
      </Bar>
    </div>
  );
}

function NavArrow({ d, off, label, narrow }) {
  return (
    <button aria-label={label} className={clsx("flex shrink-0 justify-center", narrow ? "w-[22px]" : "w-6")}>
      <svg viewBox="0 0 12 12" className="size-3">
        <path d={d} fill={off ? "#cfcfcf" : "#2f6fe4"} stroke={off ? "#b8b8b8" : "#1b4cb4"} strokeWidth=".6" />
      </svg>
    </button>
  );
}

function DetailToolbar() {
  return (
    <div className="flex h-[27px] shrink-0 items-center">
      <div className="flex">
        <NavArrow label="首行" d="M1 1h2v10H1zM10 1v10L4 6z" off />
        <NavArrow label="上一行" d="M9 1v10L3 6z" off />
        <NavArrow label="下一行" d="M3 1v10l6-5z" />
        <NavArrow label="末行" d="M2 1v10l6-5zM9 1h2v10H9z" />
      </div>
      <Sep />
      <NavArrow label="上移" d="M6 1l5 5H8v5H4V6H1z" off narrow />
      <NavArrow label="下移" d="M6 11l5-5H8V1H4v5H1z" narrow />
      <Sep />
      <Tool icon="insert" label="插入" disabled />
      <Tool icon="remove" label="删除" disabled />
      <Tool icon="ruler" label="缩尺配筋" disabled />
      <Tool icon="info" label="钢筋信息" />
      <Tool icon="lib" label="钢筋图库" />
      <Tool icon="other" label="其他" menu />
      <span className="mr-[3px]"><Tool label="关闭" /></span>
      <Sep />
      <span className="ml-[3px]">单构件钢筋总重(kg) : 117.593</span>
    </div>
  );
}

const columns = [
  { w: "w-[32px]", label: "" },
  { w: "w-[73px]", label: "筋号" },
  { w: "w-[56px]", label: "直径(mm)" },
  { w: "w-[36px]", label: "级别" },
  { w: "w-[34px]", label: "图号" },
  { w: "w-[200px]", label: "图形" },
  { w: "w-[166px]", label: "计算公式" },
  { w: "w-[156px]", label: "公式描述" },
  { w: "w-[61px]", label: "长度(mm)" },
  { w: "w-[38px]", label: "根数" },
  { w: "w-[39px]", label: "搭接" },
  { w: "w-[49px]", label: "损耗(%)" },
  { w: "w-[61px]", label: "单重(kg)" },
  { w: "w-[61px]", label: "总重(kg)" },
  { w: "w-[72px]", label: "钢筋归类" },
];

const rows = [
  { id: "1*", h: "h-[61px]", name: "横向钢筋.1", d: "10", pic: "0", rest: ["40*d+1200+40*d", "端头+净长+端头", "2000", "55", "0", "0", "1.234", "67.87", "直筋"] },
  { id: "2", h: "h-[29px]", name: "水平纵筋.1", d: "12", pic: "1", rest: ["8030", "净长", "8030", "4", "0", "0", "7.131", "28.523", "直筋"] },
  { id: "3", h: "h-[29px]", name: "水平纵筋.2", d: "10", pic: "1", rest: ["8030", "净长", "8030", "4", "560", "0", "5.3", "21.2", "直筋"] },
];

function GradeMark() {
  return (
    <svg viewBox="0 0 9 10" className="mx-auto h-[10px] w-[9px]" fill="none" stroke="#000">
      <path d="M3.500 0v9M5.500 0v9M1 8.500h7M1 2.500h7M.5 3v3M8.500 3v3M1 6.500h7" />
    </svg>
  );
}

function BarShape({ bent }) {
  if (!bent) {
    return (
      <div className="mx-auto w-[150px] border-b-2 border-black text-center font-['Liberation_Sans',sans-serif] text-[11px] leading-3 text-[#f00]">
        8030
      </div>
    );
  }
  return (
    <svg className="mx-auto block h-[60px] w-[199px] font-['Liberation_Sans',sans-serif]" fontSize="11">
      <path d="M82 16v-4h21v40H83v-7" fill="none" stroke="#000" strokeWidth="2" />
      <text x="79" y="25">28</text>
      <text x="89" y="25">575</text>
      <text x="98" y="59">26575</text>
      <text transform="translate(97 48) rotate(-90)">1350</text>
      <text transform="translate(99 29) rotate(-90)">098</text>
      <text transform="translate(95 12) rotate(-90)">19</text>
    </svg>
  );
}

const cell = "border-r border-b border-[#b9b9b9] p-0";

function RebarTable() {
  return (
    <div className="flex min-h-0 flex-1 flex-col border-2 border-r border-[#a6a6a6] border-b-[#b8b8b8] bg-[#f0f0f0]">
      <div className="flex h-[152px] min-h-0">
        <div className="min-w-0 flex-1 overflow-hidden bg-white">
          <table className="w-[1134px] table-fixed border-separate border-spacing-0 leading-3">
            <thead>
              <tr className="h-[19px]">
                {columns.map((c) => (
                  <th
                    key={c.label}
                    className={clsx(
                      cell,
                      c.w,
                      "font-normal whitespace-nowrap",
                      c.label === "直径(mm)" ? "bg-linear-to-b from-[#f8d193] to-[#f4b858] text-[#5a003c]" : "bg-linear-to-b from-white to-[#efefef]"
                    )}
                  >
                    <Sim>{c.label}</Sim>
                  </th>
                ))}
              </tr>
            </thead>
            <tbody>
              {rows.map((r, i) => (
                <tr key={r.id} className={clsx(r.h, "bg-[#ccffd9]")}>
                  <th className={clsx(cell, "font-normal", i === 0 ? "bg-[#ffd18a] text-[#5a003c]" : "bg-linear-to-b from-white to-[#efefef]")}>
                    <Sim>{r.id}</Sim>
                  </th>
                  <td className={clsx(cell, "border-r-black pl-0.5 whitespace-nowrap")}><Sim>{r.name}</Sim></td>
                  <td className={clsx(cell, "pl-0.5", i === 0 && "bg-[#aceada]")}><Sim>{r.d}</Sim></td>
                  <td className={cell}><GradeMark /></td>
                  <td className={clsx(cell, "pl-0.5")}><Sim>{r.pic}</Sim></td>
                  <td className={cell}><BarShape bent={i === 0} /></td>
                  {r.rest.map((v, k) => (
                    <td key={k} className={clsx(cell, "pl-0.5")}><Sim>{v}</Sim></td>
                  ))}
                </tr>
              ))}
              <tr className="h-[20px]">
                <th className={clsx(cell, "bg-[#f7f7f7] font-normal")}><Sim>4</Sim></th>
                {columns.slice(1).map((c, i) => (
                  <td key={c.label} className={clsx(cell, i === 0 && "border-r-black")} />
                ))}
              </tr>
            </tbody>
          </table>
        </div>
        <div className="flex w-[17px] flex-col items-center text-[#505050]">
          <ChevronUp size={12} strokeWidth={3} className="my-[3px]" />
          <div className="h-[47px] w-[15px] bg-[#cdcdcd]" />
          <ChevronDown size={12} strokeWidth={3} className="mt-auto mb-0.5" />
        </div>
      </div>
      <div className="flex h-[17px] items-center text-[#505050]">
        <ChevronLeft size={12} strokeWidth={3} className="mx-0.5" />
        <div className="mr-auto ml-px h-[15px] w-[63%] bg-[#cdcdcd]" />
        <ChevronRight size={12} strokeWidth={3} className="mr-[19px]" />
      </div>
    </div>
  );
}

function DetailPanel() {
  return (
    <section className="flex h-[203px] shrink-0 pt-[3px] pr-0.5">
      <div className="flex w-[13px] shrink-0 flex-col">
        <button aria-label="关闭明细" className="m-px size-[10px] border border-[#555] bg-[#e6c9c9]"><X size={8} strokeWidth={3} /></button>
        <div className="mt-0.5 mb-[3px] flex-1 bg-[radial-gradient(circle,#b4b4b4_1px,transparent_1px)] bg-[size:5px_5px]" />
      </div>
      <div className="flex min-w-0 flex-1 flex-col">
        <DetailToolbar />
        <RebarTable />
      </div>
    </section>
  );
}

function SogouLogo({ className }) {
  return (
    <svg viewBox="0 0 28 28" className={className} fill="none">
      <path d="M2 5 22 1c3 0 4 1 4 3l2 18c0 2-1 3-3 4L7 28c-2 0-3-1-3-3L0 8c0-2 1-3 2-3z" fill="#f4511e" />
      <path d="M21 8c-4-2-12-1-12 2.500S20 13 20 17.500 11 21 7 20" stroke="#fff" strokeWidth="3.500" strokeLinecap="round" />
    </svg>
  );
}

const status = [
  ["X=18157 Y=-1155", "w-[148px]"],
  ["层高:2.8m", "w-[78px]"],
  ["底标高:10.27m", "w-[98px]"],
  ["1(1)", "w-[48px]"],
  ["", "flex-1"],
];

function StatusBar() {
  return (
    <footer className="relative flex h-[22px] shrink-0 gap-0.5 pt-0.5">
      {status.map(([text, w]) => (
        <div key={w} className={clsx("flex items-center border border-[#d4d4d4] bg-linear-to-b from-[#fdfdfd] to-[#f0f0f0] pl-px", w)}>
          <span><Sim>{text}</Sim></span>
        </div>
      ))}
      <div className="absolute right-0 bottom-0 flex h-[23px] w-[184px] items-center border-t border-[#a8c8e8] bg-[#f7fbff] text-[#1b74d0]">
        <SogouLogo className="-mt-[3px] size-7 shrink-0" />
        <div className="flex flex-1 items-center justify-between pr-1 pl-[5px]">
          <span className="text-[14px] font-bold">中</span>
          <svg viewBox="0 0 14 14" className="size-3.5" fill="none">
            <circle cx="4" cy="5" r="2" stroke="currentColor" strokeWidth="1.500" />
            <path d="M9 8h4c0 3-1 4-3 5l1-3H9z" fill="currentColor" />
          </svg>
          <Mic size={15} className="fill-current" />
          <Keyboard size={17} />
          <span className="relative text-[#a9bdd8]">
            <svg viewBox="0 0 16 16" className="size-4" fill="currentColor">
              <circle cx="6" cy="4" r="3" />
              <path d="M0 13c0-4 3-5 6-5s4 1 4 5z" />
            </svg>
            <span className="absolute -right-0.5 -bottom-1 text-[8px] leading-3 font-bold">17</span>
          </span>
          <Shirt size={15} className="fill-current" />
          <Wrench size={15} className="fill-current" />
        </div>
      </div>
    </footer>
  );
}

const swirl = "M23 3c-1 3-4 3.500-6 2.500-6-1.500-10 2-10 6.500 0 4 3 6 6 6 4 0 5-4 2-5-1 0-3 0-3 1-1-3 1-5 4-5 4 0 6 3 5 7s-5 7-10 7C5 23 1 18 1 12S5 2 11 1.500c5-.500 8 2.500 12 1.500z";

function Swirl({ filled }) {
  return (
    <svg viewBox="0 0 24 24" className={filled ? "size-6" : "size-5"}>
      <path d={swirl} fill={filled ? "#1b9af5" : "none"} stroke={filled ? "#1473d0" : "#c8c8c8"} strokeWidth="1.200" />
    </svg>
  );
}

function Task({ label, active, running, children }) {
  return (
    <button aria-label={label} className={clsx("relative flex w-[49px] items-center justify-center", active && "bg-[#353c3f]")}>
      {children}
      {running && <span className={clsx("absolute bottom-0 h-0.5 bg-[#76b9ed]", active ? "inset-x-0" : "inset-x-[5px]")} />}
    </button>
  );
}

function Taskbar() {
  return (
    <div className="flex h-10 shrink-0 bg-[#000c10] text-white">
      <button aria-label="开始" className="flex w-12 items-center justify-center bg-black">
        <svg viewBox="0 0 16 16" className="size-4" fill="#fff">
          <path d="M0 2.300 7 1.300v6.200H0zM8 1.200 16 0v7.500H8zM0 8.500h7v6.200l-7-1zM8 8.500h8V16l-8-1.200z" />
        </svg>
      </button>
      <label className="flex w-[344px] items-center bg-[#333] pr-3.5 pl-[9px]">
        <span className="size-[21px] shrink-0 rounded-full border-3 border-[#f2f2f2]" />
        <input placeholder="在这里输入你要搜索的内容" className="ml-1.5 min-w-0 flex-1 text-[14px] outline-none placeholder:text-[#9a9a9a]" />
        <Mic size={17} strokeWidth={1.500} className="text-[#a8a8a8]" />
      </label>
      <div className="flex">
        <Task label="风车">
          <svg viewBox="0 0 24 24" className="size-6">
            {[0, 72, 144, 216, 288].map((a) => (
              <path key={a} d="M12 13C6 12 3 7 7 2c5-3 10 0 10 4-4-1-5 3-5 7z" fill="#e6e6e6" stroke="#000c10" strokeWidth=".8" transform={`rotate(${a} 12 12)`} />
            ))}
          </svg>
        </Task>
        <Task label="广联达"><Swirl /></Task>
        <span className="my-3 mr-3.5 ml-[9px] w-[3px] border-x border-[#444]" />
        <Task label="Edge">
          <svg viewBox="0 0 24 24" className="size-6">
            <path d="M2 11C3 4 8 1.500 13 1.500c6 0 9 4 9 9V13H9c0 4 3 5.500 6 5.500 2.500 0 4.500-.7 6-1.500v4.500c-2 1-4.500 1.500-7 1.500-6 0-10-3.500-10-9 0-3.500 2-6.500 5-8-4 .8-6 3-7 5zM9 9.500h7.500C16.500 7 15 6 13 6s-4 1.500-4 3.500z" fill="#0a7bdc" />
          </svg>
        </Task>
        <Task label="应用商店">
          <svg viewBox="0 0 24 24" className="size-6">
            <path d="M2 7l20-2v17l-3 1.500L2 20z" fill="#fff" />
            <path d="M8 6c0-6 8-6 8 0" fill="none" stroke="#fff" strokeWidth="1.500" />
            <path d="M5 10l5-.6v4H5zM11 9.200l6-.7v5h-6zM5 14.500h5v4l-5-.6zM11 14.500h6v5l-6-.8z" fill="#000c10" />
          </svg>
        </Task>
        <Task label="文件资源管理器">
          <svg viewBox="0 0 24 24" className="size-6">
            <path d="M1 3h8l2 2h12v16H1z" fill="#e8b83a" />
            <path d="M1 7h22v14H1z" fill="#fde28a" />
            <path d="M5 22v-8h14v8h-4v-4H9v4z" fill="#3aa7e8" />
          </svg>
        </Task>
        <Task label="广联达服务" running><Swirl filled /></Task>
        <Task label="浏览器" running>
          <svg viewBox="0 0 24 24" className="size-6" fill="none">
            <circle cx="12" cy="12" r="10" fill="#55b82c" stroke="#d8f5c8" strokeWidth="1.500" />
            <path d="M17.500 15c-2.500 4-11 2.500-11-3s11-6 11 0h-11" stroke="#fff" strokeWidth="2.500" />
            <path d="M3 22C1 12 12 1 22 2" stroke="#3f9a22" strokeWidth="1.500" />
          </svg>
        </Task>
        <Task label="GGJ2013" active running><AppLogo className="size-6" /></Task>
        <Task label="写字板" running>
          <svg viewBox="0 0 24 24" className="size-6" fill="none">
            <rect x=".5" y=".5" width="23" height="23" rx="2" fill="#f5a11c" stroke="#ffd56a" />
            <path d="M3 6l12-3 4 15-12 3z" fill="#fffbe8" />
            <path d="M6 9l8-2M7 12l8-2M8 15l5-1" stroke="#6a6a6a" />
            <path d="M22 1l-9 14-1 3 3-2L24 3z" fill="#8a3a10" />
          </svg>
        </Task>
      </div>
      <div className="ml-auto flex items-center">
        <div className="w-[50px] text-center leading-[17px]">
          28%<br />CPU使用
        </div>
        <div className="ml-[15px] flex items-center">
          <ChevronUp size={18} strokeWidth={1.500} />
          <svg viewBox="0 0 17 12" className="ml-2 h-3 w-[17px]" fill="none" stroke="#fff">
            <path d="M4.500 3.500h11v7h-11zM0 4h3M1 1v3h3V1M2.500 5v3h2" />
            <path d="M7 5.500h7v3H7z" fill="#fff" />
          </svg>
          <svg viewBox="0 0 16 16" className="ml-2.5 size-3.5" fill="none" stroke="#e0e0e0" strokeWidth="1.300">
            <path d="M1 14C2 7 7 2 15 1M5 14.500C5.500 9.500 9 6 15 5M9 15c0-3 2.500-5.500 6-6" />
            <circle cx="13" cy="13.500" r="1.500" fill="#e0e0e0" />
          </svg>
          <Volume2 size={17} strokeWidth={1.300} className="ml-1.5" />
          <svg viewBox="0 0 23 14" className="ml-2 h-3.5 w-[23px]" fill="none" stroke="#fff">
            <path d="M.5.500h22v13H.5z" />
            <path d="M3 4.500h17M3 7.500h17" strokeDasharray="2 1" />
            <path d="M3 10.500h2M7 10.500h9M18 10.500h2" />
          </svg>
          <span className="ml-2.5 text-[14px]">中</span>
          <SogouLogo className="ml-3.5 size-4" />
        </div>
        <div className="ml-[18px] w-[54px] text-center leading-[19px]">
          10:06<br />2017/9/2
        </div>
        <MessageSquare size={18} strokeWidth={1.500} className="mr-5 ml-[21px]" />
        <span className="mr-[3px] h-10 w-px bg-[#555]" />
      </div>
    </div>
  );
}

function App() {
  return (
    <div className="flex h-screen flex-col overflow-hidden bg-[#f0f0f0] font-['Open_Sans','Noto_Sans_CJK_SC',sans-serif] text-[12px] leading-4 text-black">
      <TitleBar />
      <MenuBar />
      <MainToolbar />
      <div className="flex min-h-0 flex-1">
        <Sidebar />
        <main className="ml-1 flex min-w-0 flex-1 flex-col">
          <EditToolbars />
          <div className="relative min-h-0 flex-1 overflow-hidden bg-black">
            <Scene />
            <DisplayPanel />
          </div>
          <SnapToolbar />
          <DetailPanel />
        </main>
      </div>
      <StatusBar />
      <Taskbar />
    </div>
  );
}

export default App;
